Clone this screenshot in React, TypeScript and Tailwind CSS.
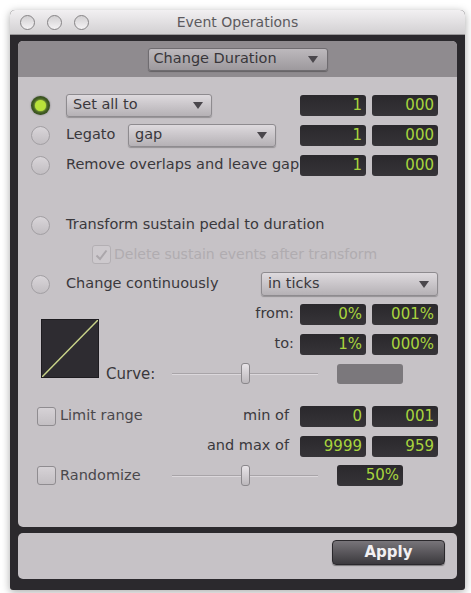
import React from "react";

const Tri = () => (
  <svg width="10" height="7" viewBox="0 0 10 7" className="shrink-0">
    <path d="M0 0 L10 0 L5 7 Z" fill="#4a474c" />
  </svg>
);

function Dropdown({ label, w }: { label: string; w: string }) {
  return (
    <div
      className={`${w} h-[23px] shrink-0 flex items-center justify-between pl-[6px] pr-[8px] rounded-[3px] border border-[#8e8b8f] bg-gradient-to-b from-[#dedade] to-[#b5b1b5] shadow-[0_1px_1px_rgba(0,0,0,0.25)] text-[14.5px] text-[#3a383c]`}
    >
      <span>{label}</span>
      <Tri />
    </div>
  );
}

function Field({ v, w = "w-[66px]" }: { v: string; w?: string }) {
  return (
    <div
      className={`${w} h-[21px] shrink-0 rounded-[3px] bg-gradient-to-b from-[#2a282c] to-[#363438] flex items-center justify-end pr-[4px] text-[15px] text-[#a8d43e] leading-none`}
    >
      {v}
    </div>
  );
}

function Fields({ a, b }: { a: string; b: string }) {
  return (
    <div className="flex gap-[6px] shrink-0">
      <Field v={a} />
      <Field v={b} />
    </div>
  );
}

function Radio({ on = false }: { on?: boolean }) {
  if (on)
    return (
      <div className="w-[19px] h-[19px] shrink-0 rounded-full bg-[#3a5420] flex items-center justify-center shadow-[0_0_2px_rgba(0,0,0,0.4)]">
        <div className="w-[11px] h-[11px] rounded-full bg-[#b9e23a] shadow-[0_0_3px_#d8ff60]" />
      </div>
    );
  return (
    <div className="w-[19px] h-[19px] shrink-0 rounded-full border border-[#a29fa3] bg-gradient-to-b from-[#d9d5d9] to-[#c2bec2]" />
  );
}

function Check({ faded = false, checked = false }: { faded?: boolean; checked?: boolean }) {
  return (
    <div
      className={`w-[19px] h-[19px] shrink-0 rounded-[3px] border flex items-center justify-center ${
        faded ? "border-[#b3afb3] bg-[#cdc9cd]" : "border-[#8f8c90] bg-gradient-to-b from-[#d6d2d6] to-[#c3bfc3]"
      }`}
    >
      {checked && (
        <svg width="13" height="12" viewBox="0 0 13 12">
          <path d="M1.5 6.5 L5 10 L11.5 1.5" fill="none" stroke={faded ? "#aba7ab" : "#444"} strokeWidth="2" />
        </svg>
      )}
    </div>
  );
}

function Slider() {
  return (
    <div className="relative w-[146px] h-[22px] shrink-0">
      <div className="absolute left-0 right-0 top-[10px] h-[2px] bg-[#a8a4a8] border-b border-[#dcd8dc]" />
      <div className="absolute left-[69px] top-0 w-[9px] h-[21px] rounded-[3px] border border-[#8a878b] bg-gradient-to-b from-[#e8e4e8] to-[#bcb8bc]" />
    </div>
  );
}

export default function App() {
  return (
    <div className="w-[471px] h-[593px] bg-white pt-[10px] pl-[10px] font-['DejaVu_Sans',sans-serif] text-[14.5px] text-[#3a383c]">
      <div className="w-[455px] h-[580px] flex flex-col rounded-t-[5px] rounded-b-[3px] bg-[#2b292d] shadow-[0_2px_8px_rgba(0,0,0,0.35)] overflow-hidden">
        {/* Title bar */}
        <div className="h-[25px] shrink-0 relative flex items-center justify-center bg-gradient-to-b from-[#f2f0f2] to-[#d2d0d2] border-b border-[#9a989a]">
          <div className="absolute left-[10px] top-[5px] flex gap-[12px]">
            <div className="w-[15px] h-[15px] rounded-full border border-[#858385] bg-gradient-to-b from-[#d2d0d2] to-[#f4f2f4]" />
            <div className="w-[15px] h-[15px] rounded-full border border-[#858385] bg-gradient-to-b from-[#d2d0d2] to-[#f4f2f4]" />
            <div className="w-[15px] h-[15px] rounded-full border border-[#858385] bg-gradient-to-b from-[#d2d0d2] to-[#f4f2f4]" />
          </div>
          <span className="text-[14px] text-[#5c5a5e]">Event Operations</span>
        </div>

        <div className="flex-1 flex flex-col px-[8px] pt-[6px] pb-[11px] gap-[6px]">
          {/* Main panel */}
          <div className="h-[486px] shrink-0 rounded-[5px] overflow-hidden flex flex-col bg-[#c6c2c6]">
            <div className="h-[36px] shrink-0 bg-[#8f8b8f] flex items-center justify-center">
              <div className="w-[180px] h-[23px] flex items-center justify-between pl-[5px] pr-[9px] rounded-[3px] border border-[#6f6c70] bg-gradient-to-b from-[#bdb9bd] to-[#9d999d] shadow-[0_1px_1px_rgba(0,0,0,0.3)] text-[14.5px] text-[#38363a]">
                <span>Change Duration</span>
                <Tri />
              </div>
            </div>

            <div className="flex-1 flex flex-col pl-[13px] pr-[19px] pt-[13px]">
              <div className="h-[30px] flex items-center">
                <Radio on />
                <div className="ml-[16px] flex-1 min-w-0">
                  <Dropdown label="Set all to" w="w-[146px]" />
                </div>
                <Fields a="1" b="000" />
              </div>
              <div className="h-[30px] flex items-center">
                <Radio />
                <div className="ml-[16px] flex-1 min-w-0 flex items-center">
                  <span className="w-[62px] shrink-0">Legato</span>
                  <Dropdown label="gap" w="w-[148px]" />
                </div>
                <Fields a="1" b="000" />
              </div>
              <div className="h-[30px] flex items-center">
                <Radio />
                <div className="ml-[16px] flex-1 min-w-0 whitespace-nowrap">Remove overlaps and leave gap</div>
                <Fields a="1" b="000" />
              </div>

              <div className="h-[30px] mt-[30px] flex items-center">
                <Radio />
                <span className="ml-[16px] whitespace-nowrap">Transform sustain pedal to duration</span>
              </div>
              <div className="h-[29px] flex items-center pl-[61px]">
                <Check faded checked />
                <span className="ml-[3px] whitespace-nowrap text-[14px] text-[#b0acb0]">Delete sustain events after transform</span>
              </div>
              <div className="h-[30px] flex items-center">
                <Radio />
                <span className="ml-[16px] whitespace-nowrap flex-1">Change continuously</span>
                <div className="w-[177px] h-[24px] flex items-center justify-between pl-[6px] pr-[8px] rounded-[3px] border border-[#8e8b8f] bg-gradient-to-b from-[#dedade] to-[#b5b1b5] shadow-[0_1px_1px_rgba(0,0,0,0.25)]">
                  <span>in ticks</span>
                  <Tri />
                </div>
              </div>

              <div className="flex">
                <div className="ml-[10px] mt-[20px] w-[58px] h-[59px] shrink-0 bg-[#2e2c31] border border-[#1e1c20]">
                  <svg width="56" height="57" viewBox="0 0 56 57">
                    <line x1="0" y1="57" x2="56" y2="0" stroke="#c9d48a" strokeWidth="1.5" />
                  </svg>
                </div>
                <div className="ml-[7px] flex-1 flex flex-col">
                  <div className="h-[30px] flex items-center justify-end">
                    <span className="mr-[6px]">from:</span>
                    <Fields a="0%" b="001%" />
                  </div>
                  <div className="h-[30px] flex items-center justify-end">
                    <span className="mr-[6px]">to:</span>
                    <Fields a="1%" b="000%" />
                  </div>
                  <div className="h-[30px] flex items-center">
                    <span className="w-[66px] shrink-0 text-[15px]">Curve:</span>
                    <Slider />
                    <div className="ml-[19px] w-[66px] h-[20px] rounded-[3px] bg-[#7b787c]" />
                  </div>
                </div>
              </div>

              <div className="mt-[12px] h-[30px] flex items-center pl-[6px]">
                <Check />
                <span className="ml-[4px] flex-1 whitespace-nowrap text-[#4a484c]">Limit range</span>
                <span className="mr-[11px]">min of</span>
                <Fields a="0" b="001" />
              </div>
              <div className="h-[30px] flex items-center justify-end">
                <span className="mr-[11px]">and max of</span>
                <Fields a="9999" b="959" />
              </div>
              <div className="h-[29px] flex items-center pl-[6px]">
                <Check />
                <span className="ml-[4px] w-[112px] shrink-0 whitespace-nowrap text-[#4a484c]">Randomize</span>
                <Slider />
                <div className="ml-[19px]">
                  <Field v="50%" />
                </div>
              </div>
            </div>
          </div>

          {/* Bottom panel */}
          <div className="flex-1 rounded-[5px] bg-[#c6c2c6] flex items-start justify-end pt-[7px] pr-[12px]">
            <div className="w-[113px] h-[25px] rounded-[4px] border border-[#2a282c] bg-gradient-to-b from-[#78757a] to-[#3c3a3e] flex items-center justify-center text-[15px] font-bold text-[#f2f0f2] shadow-[0_1px_1px_rgba(0,0,0,0.4)]">
              Apply
            </div>
          </div>
        </div>
      </div>
    </div>
  );
}
